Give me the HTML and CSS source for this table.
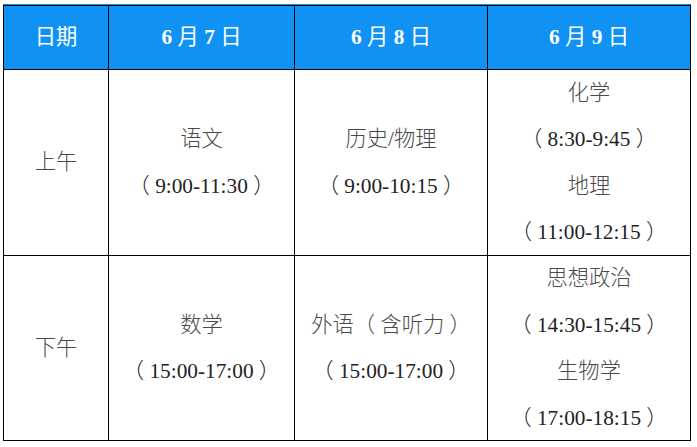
FILE: index.html
```html
<!DOCTYPE html>
<html lang="zh-CN">
<head>
<meta charset="utf-8">
<title>考试时间安排</title>
<link rel="stylesheet" href="styles.css">
</head>
<body>
<div class="wrap">
  <div class="grid">
    <div class="cell head"><span>日期</span></div>
    <div class="cell head"><span><b>6</b> 月 <b>7</b> 日</span></div>
    <div class="cell head"><span><b>6</b> 月 <b>8</b> 日</span></div>
    <div class="cell head"><span><b>6</b> 月 <b>9</b> 日</span></div>

    <div class="cell label">上午</div>
    <div class="cell"><span class="sub">语文</span><span class="time">（ 9:00-11:30 ）</span></div>
    <div class="cell"><span class="sub">历史/物理</span><span class="time">（ 9:00-10:15 ）</span></div>
    <div class="cell"><span class="sub">化学</span><span class="time">（ 8:30-9:45 ）</span><span class="sub">地理</span><span class="time">（ 11:00-12:15 ）</span></div>

    <div class="cell label">下午</div>
    <div class="cell"><span class="sub">数学</span><span class="time">（ 15:00-17:00 ）</span></div>
    <div class="cell"><span class="sub">外语（ 含听力 ）</span><span class="time">（ 15:00-17:00 ）</span></div>
    <div class="cell"><span class="sub">思想政治</span><span class="time">（ 14:30-15:45 ）</span><span class="sub">生物学</span><span class="time">（ 17:00-18:15 ）</span></div>
  </div>
</div>
</body>
</html>
```

FILE: styles.css
```css
html, body {
  margin: 0;
  padding: 0;
  background: #ffffff;
}

body {
  font-family: "Liberation Serif", "Noto Sans CJK SC", serif;
  font-size: 21.3px;
}

.wrap {
  margin: 4px 0 0 3px;
  width: 688px;
  border-top: 1px solid #1092f5;
}

.grid {
  display: grid;
  grid-template-columns: 104px 185px 192px 202px;
  grid-template-rows: 63px 185px 184px;
  gap: 1px;
  padding: 1px;
  background: #000000;
  width: max-content;
}

.cell {
  background: #ffffff;
  display: flex;
  flex-direction: column;
  align-items: center;
  justify-content: center;
  line-height: 46.5px;
  font-weight: 300;
  white-space: pre;
}

.head {
  background: #1092f5;
  color: #ffffff;
  font-weight: 400;
}

.head b {
  font-weight: 700;
}

.label {
  color: #4a4a4a;
}

.sub {
  color: #4a4a4a;
}

.time {
  color: #222222;
}
```
